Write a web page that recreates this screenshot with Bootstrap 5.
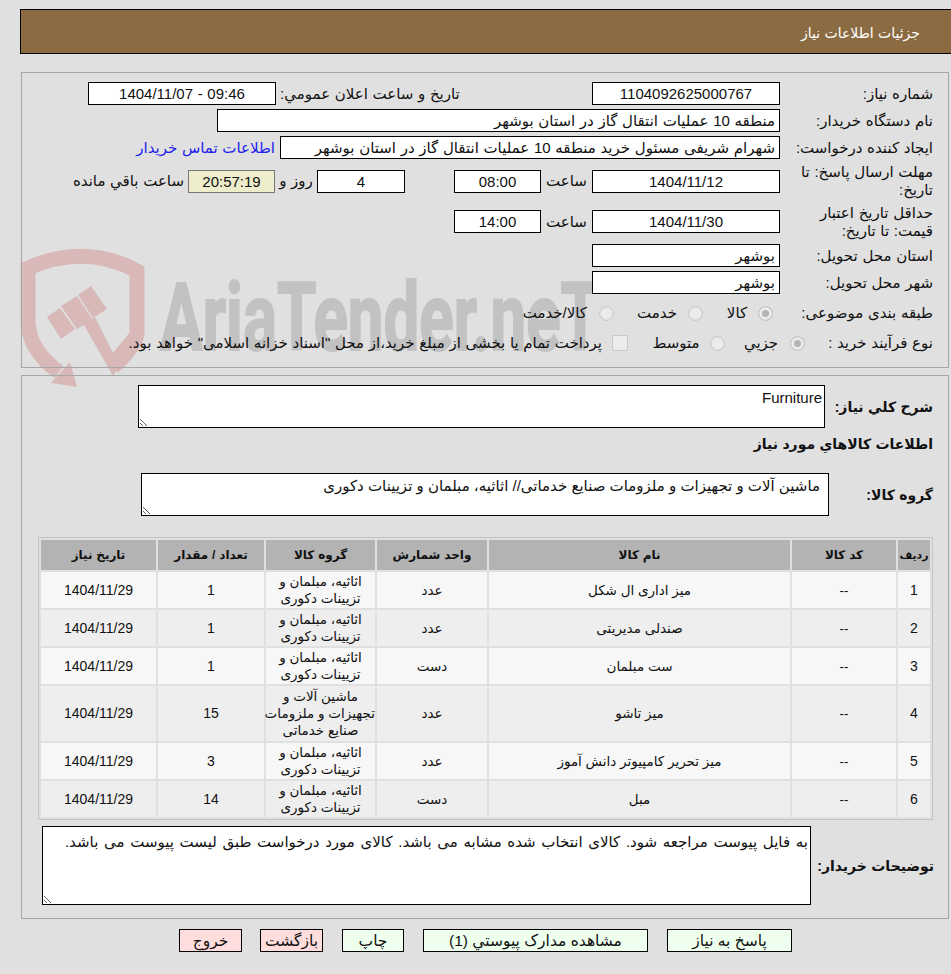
<!DOCTYPE html>
<html lang="fa" dir="rtl">
  <head>
    <meta charset="UTF-8" />
    <meta name="viewport" content="width=device-width, initial-scale=1.0" />
    <title>جزئیات اطلاعات نیاز</title>
    <link rel="stylesheet" href="https://cdn.jsdelivr.net/npm/bootstrap@5.3.0/dist/css/bootstrap.min.css" />
    <style>
      body {
        background: #e0e0e0;
        color: #111;
        font-family: "Liberation Sans", "DejaVu Sans", sans-serif;
        font-size: 15px;
        line-height: 18px;
        word-spacing: 0.5px;
        min-height: 974px;
        overflow-x: hidden;
      }
      .wmark {
        position: absolute;
        left: 0;
        top: 0;
        z-index: -1;
        pointer-events: none;
      }
      .head-bar {
        background: #8b6b41;
        border: 1px solid #000;
        border-right: 0;
        color: #fff;
        font-size: 14px;
        height: 45px;
        margin: 9px 0 0 20px;
        padding: 14px 31px 0 0;
      }
      .box {
        border: 1px solid #a6a6a6;
        margin-left: 21px;
        margin-right: 2px;
      }
      .box-one { height: 296px; margin-top: 18px; padding: 9px 15px 0 0; }
      .box-two { height: 544px; margin-top: 7px; padding: 9px 15px 0 0; }
      .frm-row { display: flex; align-items: center; height: 23px; margin-bottom: 4px; }
      .lbl { width: 153px; flex: none; line-height: 18px; padding-left: 8px; }
      .fld {
        background: #fff;
        border: 1px solid #000;
        flex: none;
        height: 23px;
        line-height: 21px;
        padding: 0 4px;
        white-space: nowrap;
        overflow: hidden;
      }
      .w-188 { width: 188px; }
      .w-87 { width: 87px; }
      .w-88 { width: 88px; }
      .w-563 { width: 563px; }
      .w-500 { width: 500px; }
      .timer { background: #eeeecc; border-color: #777; width: 87px; }
      .buyer-link { color: #2222ee; text-decoration: none; margin-right: 5px; white-space: nowrap; }
      .chk-row { height: 20px; }
      .rd {
        appearance: none;
        background: #ebebeb;
        border: 1px solid #c8c8c8;
        border-radius: 50%;
        flex: none;
        height: 15px;
        width: 15px;
        margin: 0;
        box-shadow: inset 0 0 0 1px #e0e0e0;
      }
      .rd:checked { background: #b4b4b4; box-shadow: inset 0 0 0 3px #ebebeb; }
      .sq { border-radius: 2px; height: 16px; width: 16px; box-shadow: none; }
      .ta {
        background: #fff;
        border: 1px solid #000;
        border-radius: 0;
        color: #111;
        display: block;
        flex: none;
        font: inherit;
        outline: 0;
        padding: 3px 2px;
      }
      .bold-lbl { font-weight: 700; font-size: 14px; white-space: nowrap; }
      .goods {
        border: 1px solid #c4c4c4;
        border-collapse: separate;
        border-spacing: 2px;
        margin: 21px 0 0;
        table-layout: fixed;
        text-align: center;
        width: 895px;
      }
      .goods th {
        background: #b3b3b3;
        border: 0;
        color: #111;
        font-size: 12px;
        height: 30px;
        padding: 0;
        vertical-align: middle;
      }
      .goods th:first-child { font-size: 11px; }
      .goods td {
        background: #eeeeee;
        border: 0;
        color: #111;
        font-size: 13.5px;
        word-spacing: 0;
        line-height: 17px;
        padding: 1px 0;
        vertical-align: middle;
        height: 36px;
      }
      .goods td.num-cell { font-size: 14px; }
      .goods td.grp-cell { white-space: nowrap; }
      .goods tr.tall-row td { height: 55px; }
      .goods tr.odd-row td { background: #f7f7f7; }
      .act {
        border: 1px solid #000;
        border-radius: 0;
        color: #111;
        font-size: 15.5px;
        height: 23px;
        line-height: 21px;
        padding: 0;
      }
      .act-ok { background: #eeffee; }
      .act-no { background: #ffdddd; }
      .deadline { margin-top: 11px; margin-bottom: 18px; height: 22px; }
      .valid { margin-bottom: 11px; }
      .hr-lbl { width: 51px; text-align: center; }
      .pub-gap { width: 66px; flex: none; }
      .gap-49 { width: 49px; }
      .day-lbl { width: 42px; text-align: center; }
      .left-lbl { white-space: nowrap; }
      .kind { margin-top: 9px; margin-bottom: 10px; }
      .kind > .lbl { width: 160px; white-space: nowrap; }
      .proc > .lbl { width: 128px; white-space: nowrap; }
      .opt-a { width: 42px; text-align: center; }
      .opt-b { width: 62px; text-align: center; }
      .opt-c { margin-right: 12px; white-space: nowrap; }
      .kind .rd:nth-of-type(2) { margin-right: 13px; }
      .kind .rd:nth-of-type(3) { margin-right: 12px; }
      .opt-d { width: 58px; text-align: center; }
      .opt-e { width: 68px; text-align: center; }
      .opt-f { margin-right: 10px; white-space: nowrap; }
      .proc .rd:nth-of-type(2) { margin-right: 7px; }
      .proc .rd:nth-of-type(3) { margin-right: 14px; }
      .need-lbl { width: 108px; }
      .need-ta { width: 687px; height: 43px; }
      .info-lbl { margin-top: 7px; height: 38px; line-height: 18px; }
      .group-lbl { width: 104px; }
      .group-ta { width: 688px; height: 43px; padding: 3px 8px; }
      .note-row { margin-top: 6px; margin-right: -1px; }
      .note-lbl { width: 123px; }
      .note-ta { width: 769px; height: 79px; padding: 6px 2px 3px; word-spacing: 1.5px; }
      .action-row { margin: 10px 159px 0 0; }
      .b-reply { width: 125px; }
      .b-docs { width: 225px; margin-right: 19px; }
      .b-print { width: 62px; margin-right: 19px; }
      .b-back { width: 63px; margin-right: 19px; }
      .b-exit { width: 63px; margin-right: 18px; }
    </style>
  </head>
  <body>
    <svg class="wmark" width="951" height="400" viewBox="0 0 951 400">
      <g fill="none" stroke="#d9b8b8" stroke-width="15">
        <path d="M59 372Q28 350 28 320L28 268Q85 243 137 271L137 333Q137 345 113 367" />
      </g>
      <g fill="#d9b8b8">
        <polygon points="70,362 77,387 51,383" />
        <polygon points="84,325 95,317 113,353 130,332 130,350 113,376" />
        <polygon points="47,317 60,308 75,329 61,339" />
        <polygon points="61,306 77,296 93,320 77,329" />
        <polygon points="78,295 91,286 107,309 93,318" />
      </g>
      <text x="160" y="350" font-family="Roboto, sans-serif" font-weight="700" font-size="94" fill="#c2c2c2" stroke="#c2c2c2" stroke-width="2" textLength="440" lengthAdjust="spacingAndGlyphs" direction="ltr">AriaTender.neT</text>
    </svg>

    <div class="head-bar">جزئیات اطلاعات نیاز</div>

    <div class="box box-one">
      <div class="frm-row">
        <div class="lbl">شماره نیاز:</div>
        <div class="fld w-188 text-center">1104092625000767</div>
        <div class="me-auto"></div>
        <div class="ms-1">تاریخ و ساعت اعلان عمومي:</div>
        <div class="fld w-188 text-center" dir="ltr">1404/11/07 - 09:46</div>
        <div class="pub-gap"></div>
      </div>
      <div class="frm-row">
        <div class="lbl">نام دستگاه خریدار:</div>
        <div class="fld w-563">منطقه 10 عملیات انتقال گاز در استان بوشهر</div>
      </div>
      <div class="frm-row mb-0">
        <div class="lbl">ایجاد کننده درخواست:</div>
        <div class="fld w-500">شهرام شریفی مسئول خرید منطقه 10 عملیات انتقال گاز در استان بوشهر</div>
        <a class="buyer-link" href="#">اطلاعات تماس خریدار</a>
      </div>
      <div class="frm-row deadline">
        <div class="lbl">مهلت ارسال پاسخ: تا تاریخ:</div>
        <div class="fld w-188 text-center">1404/11/12</div>
        <div class="hr-lbl">ساعت</div>
        <div class="fld w-87 text-center">08:00</div>
        <div class="gap-49"></div>
        <div class="fld w-88 text-center">4</div>
        <div class="day-lbl">روز و</div>
        <div class="fld timer text-center">20:57:19</div>
        <div class="me-1 left-lbl">ساعت باقي مانده</div>
      </div>
      <div class="frm-row valid">
        <div class="lbl">حداقل تاریخ اعتبار قیمت: تا تاریخ:</div>
        <div class="fld w-188 text-center">1404/11/30</div>
        <div class="hr-lbl">ساعت</div>
        <div class="fld w-87 text-center">14:00</div>
      </div>
      <div class="frm-row">
        <div class="lbl">استان محل تحویل:</div>
        <div class="fld w-188">بوشهر</div>
      </div>
      <div class="frm-row">
        <div class="lbl">شهر محل تحویل:</div>
        <div class="fld w-188">بوشهر</div>
      </div>
      <div class="frm-row chk-row kind">
        <div class="lbl">طبقه بندی موضوعی:</div>
        <input class="rd" type="radio" name="kind" checked disabled />
        <span class="opt-a">کالا</span>
        <input class="rd" type="radio" name="kind" disabled />
        <span class="opt-b">خدمت</span>
        <input class="rd" type="radio" name="kind" disabled />
        <span class="opt-c">کالا/خدمت</span>
      </div>
      <div class="frm-row chk-row proc">
        <div class="lbl">نوع فرآیند خرید :</div>
        <input class="rd" type="radio" name="proc" checked disabled />
        <span class="opt-d">جزیي</span>
        <input class="rd" type="radio" name="proc" disabled />
        <span class="opt-e">متوسط</span>
        <input class="rd sq" type="checkbox" disabled />
        <span class="opt-f">پرداخت تمام یا بخشی از مبلغ خرید،از محل "اسناد خزانه اسلامی" خواهد بود.</span>
      </div>
    </div>

    <div class="box box-two">
      <div class="d-flex align-items-center">
        <div class="bold-lbl need-lbl">شرح كلي نیاز:</div>
        <textarea class="ta need-ta" readonly>Furniture</textarea>
      </div>
      <div class="bold-lbl info-lbl">اطلاعات کالاهاي مورد نیاز</div>
      <div class="d-flex align-items-center">
        <div class="bold-lbl group-lbl">گروه کالا:</div>
        <textarea class="ta group-ta" readonly>ماشین آلات و تجهیزات و ملزومات صنایع خدماتی// اثاثیه، مبلمان و تزیینات دکوری</textarea>
      </div>
      <table class="table goods">
        <colgroup>
          <col style="width: 32px" /><col style="width: 104px" /><col style="width: 301px" /><col style="width: 110px" /><col style="width: 109px" /><col style="width: 106px" /><col />
        </colgroup>
        <thead>
          <tr><th>ردیف</th><th>کد کالا</th><th>نام کالا</th><th>واحد شمارش</th><th>گروه کالا</th><th>تعداد / مقدار</th><th>تاریخ نیاز</th></tr>
        </thead>
        <tbody id="goodsBody"></tbody>
      </table>
      <div class="d-flex align-items-center note-row">
        <div class="bold-lbl note-lbl">توضیحات خریدار:</div>
        <textarea class="ta note-ta" readonly>به فایل پیوست مراجعه شود. کالای انتخاب شده مشابه می باشد. کالای مورد درخواست طبق لیست پیوست می باشد.</textarea>
      </div>
    </div>

    <div class="d-flex action-row">
      <button class="btn act act-ok b-reply" type="button">پاسخ به نیاز</button>
      <button class="btn act act-ok b-docs" type="button">مشاهده مدارک پیوستي (1)</button>
      <button class="btn act act-ok b-print" type="button">چاپ</button>
      <button class="btn act act-no b-back" type="button">بازگشت</button>
      <button class="btn act act-no b-exit" type="button">خروج</button>
    </div>

    <script src="https://cdn.jsdelivr.net/npm/bootstrap@5.3.0/dist/js/bootstrap.bundle.min.js"></script>
    <script>
      const decor = "اثاثیه، مبلمان و<br>تزیینات دکوری";
      const rows = [
        ["میز اداری ال شکل", "عدد", decor, 1],
        ["صندلی مدیریتی", "عدد", decor, 1],
        ["ست مبلمان", "دست", decor, 1],
        ["میز تاشو", "عدد", "ماشین آلات و<br>تجهیزات و ملزومات<br>صنایع خدماتی", 15],
        ["میز تحریر کامپیوتر دانش آموز", "عدد", decor, 3],
        ["مبل", "دست", decor, 14],
      ];

      const tbody = document.getElementById("goodsBody");
      rows.forEach((row, index) => {
        const tr = document.createElement("tr");
        if (index % 2 === 0) tr.classList.add("odd-row");
        if (index === 3) tr.classList.add("tall-row");
        tr.innerHTML = `
          <td class="num-cell">${index + 1}</td>
          <td>--</td>
          <td>${row[0]}</td>
          <td>${row[1]}</td>
          <td class="grp-cell">${row[2]}</td>
          <td class="num-cell">${row[3]}</td>
          <td class="num-cell">1404/11/29</td>
        `;
        tbody.appendChild(tr);
      });
    </script>
  </body>
</html>
